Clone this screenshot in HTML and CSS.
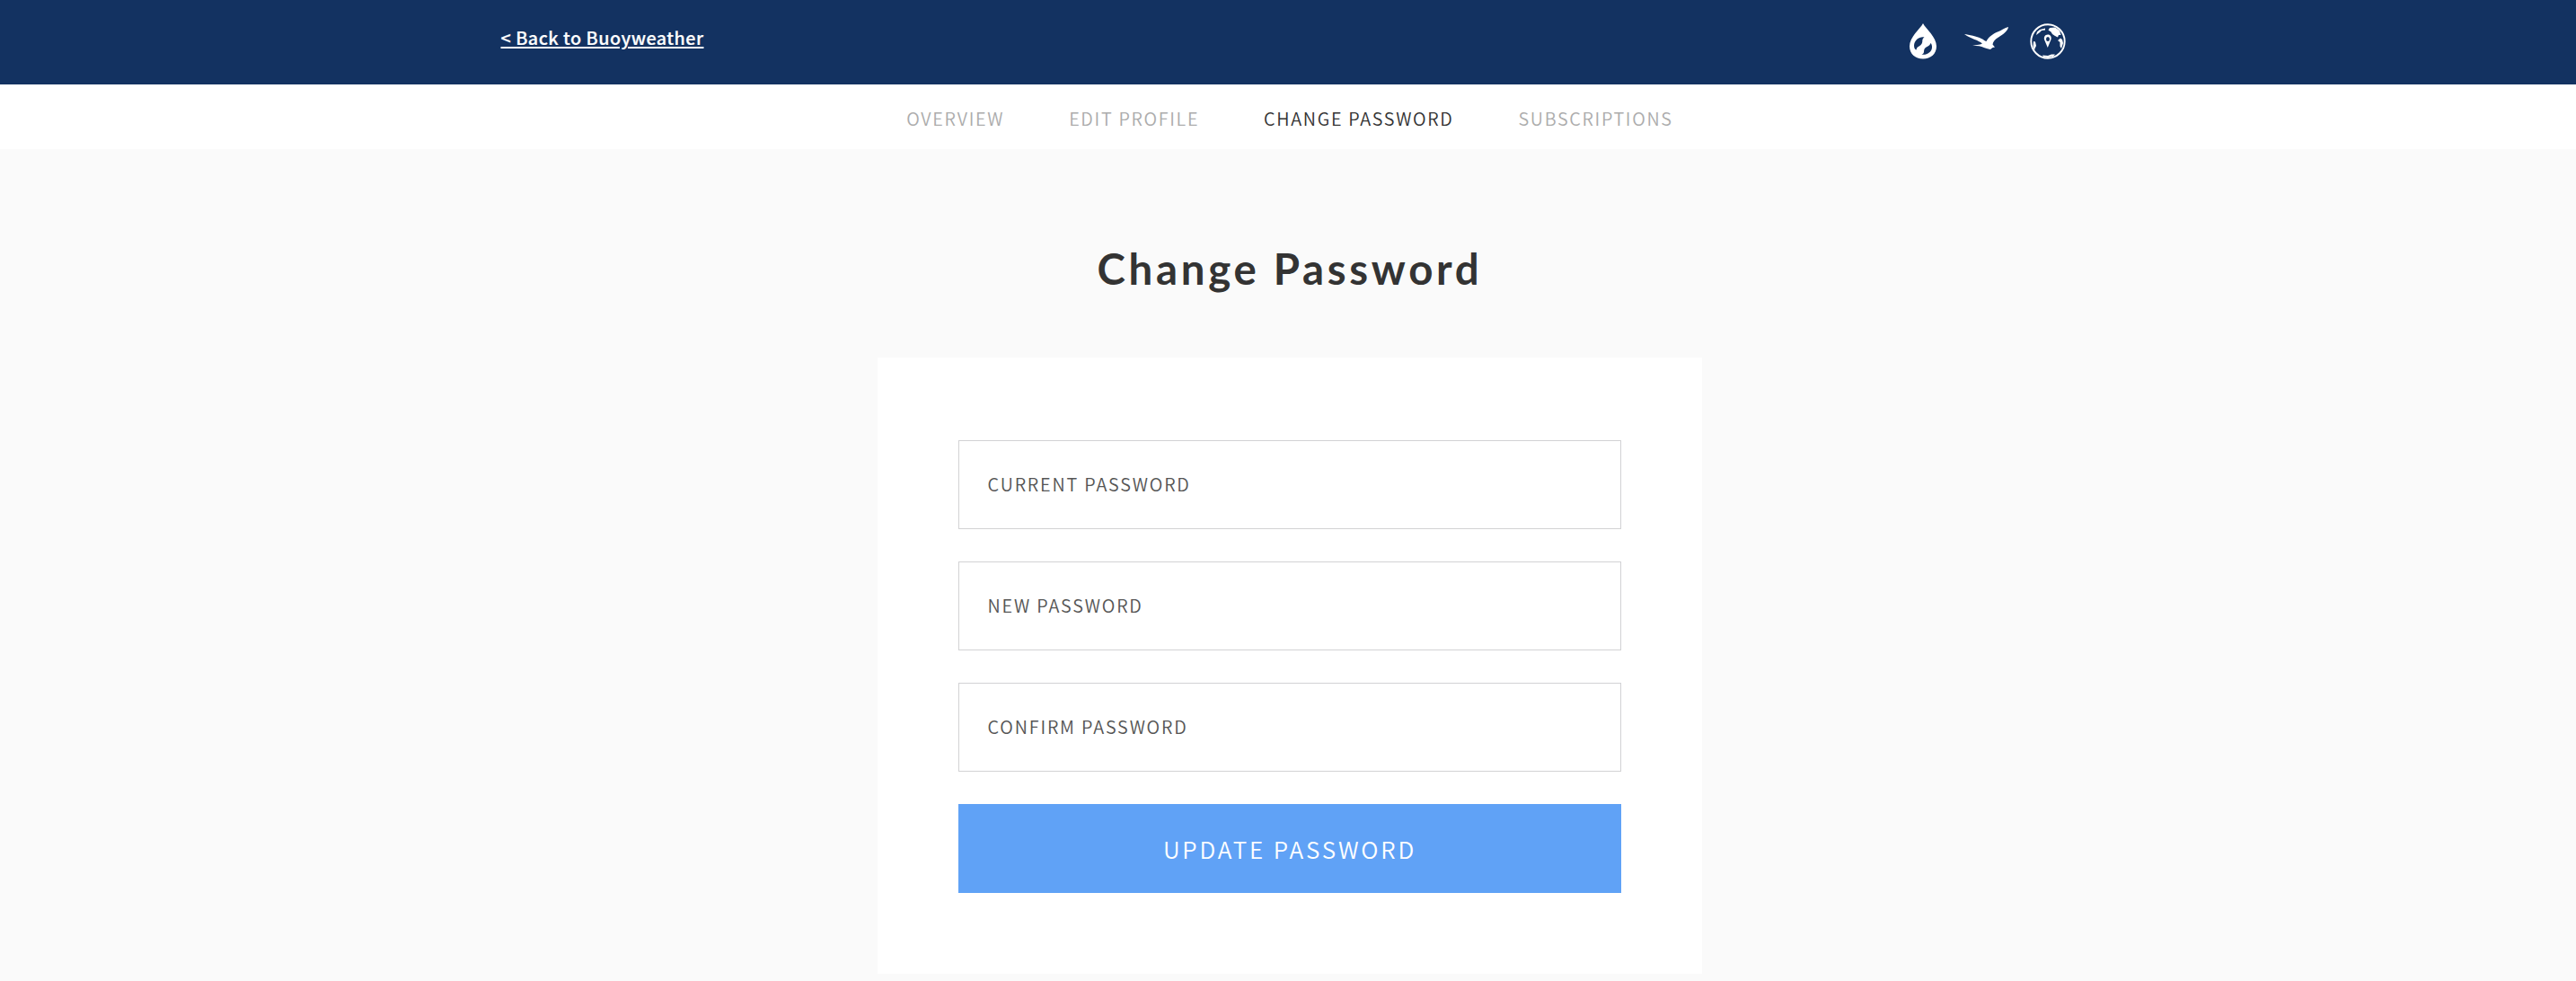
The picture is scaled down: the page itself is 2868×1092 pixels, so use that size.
FILE: index.html
```html
<!DOCTYPE html>
<html lang="en">
<head>
<meta charset="utf-8">
<title>Change Password</title>
<link rel="stylesheet" href="styles.css">
</head>
<body>
<header class="topbar">
  <a class="back" href="#">&lt; Back to Buoyweather</a>
  <div class="brands">
    <svg class="drop" viewBox="0 0 30 40" width="30" height="40"><path fill="#fff" d="M15 0C12 6 0 15 0 25.500C0 34 6.500 39.500 15 39.500S30 34 30 25.500C30 15 18 6 15 0Z"/><path fill="#133261" d="M16.500 15.500C11 14.500 5.500 18.500 5 24.500C5 27.500 6 29 7.500 29.500C8 27 9 26.200 11 25.200C13.500 23.800 14.500 21.500 14.300 19C14.500 17 15.500 16 16.500 15.500ZM23.500 22C22.500 24.500 21.500 25 19.500 26C16.800 27.300 16 29 16 31.500C16 33.500 14.500 34.200 13.500 34.700C19.500 35.500 24.500 32 25 27C25.200 24.500 24.500 23 23.500 22Z"/></svg>
    <svg class="bird" viewBox="0 0 50 26" width="50" height="26"><path fill="#fff" d="M0 8C5 8.500 14 10.500 19 13C21.500 14 22.500 15.500 24.500 16C27 11 32 7.500 37 5.500C41 4 45 1 49 0C48.500 4.500 43 8.500 38 11.500C34 14 32 16 31.500 19.500L34 22.500L31.500 23L29 25C25 24.500 20 22 16.500 21.200L9 20.800L16 19.800C18 19.500 19 19 20 18.500C15 14.500 8 13 3 10Z"/></svg>
    <svg class="globe" viewBox="0 0 40 40" width="40" height="40"><circle cx="20" cy="20" r="18.700" fill="none" stroke="#fff" stroke-width="1.900"/><path fill="#fff" d="M22 5L28 4.500L33 8L34.500 13L32 13L31 15.500L28 14L25 12L23.500 9.500L20.500 7.500ZM31 19L34 16.500L36 18L37 22L35 28L33.500 25.500L33.500 21ZM4 20L6 20.500L7 25L5.500 28L5 31L3.500 26ZM8 9.500L11 7L17 5.500L17 7.500L13 8L11 10L7 13ZM14 35.500L20 36L24 34.500L28 34.500L26 37L20 38L15 37Z"/><path fill="#fff" fill-rule="evenodd" d="M20 12.500C16.500 12.500 15.500 15.500 16 18L19.800 27L23.500 18C24.300 15 23 12.500 20 12.500ZM20 15A2 2.500 0 1 1 20 20A2 2.500 0 1 1 20 15Z"/></svg>
  </div>
</header>
<nav class="tabs">
  <a class="tab" href="#">OVERVIEW</a>
  <a class="tab" href="#">EDIT PROFILE</a>
  <a class="tab active" href="#">CHANGE PASSWORD</a>
  <a class="tab" href="#">SUBSCRIPTIONS</a>
</nav>
<main class="page">
  <h1 class="title">Change Password</h1>
  <form class="card">
    <label class="field">CURRENT PASSWORD</label>
    <label class="field">NEW PASSWORD</label>
    <label class="field">CONFIRM PASSWORD</label>
    <button class="submit" type="button">UPDATE PASSWORD</button>
  </form>
</main>
</body>
</html>
```
FILE: styles.css
```css
* { box-sizing: border-box; }
body {
  margin: 0;
  height: 1092px;
  overflow: hidden;
  background: #fafafa;
  font-family: "Noto Sans CJK JP", sans-serif;
  color: #333;
}
a { text-decoration: none; }
.topbar {
  height: 94px;
  padding: 0 568px 0 557.5px;
  background: #133261;
  display: flex;
  justify-content: space-between;
  align-items: flex-start;
}
.back {
  margin-top: 27px;
  font-size: 19.8px;
  line-height: 30px;
  font-weight: 500;
  letter-spacing: .46px;
  -webkit-text-stroke: .2px #fff;
  color: #fff;
  text-decoration: underline;
  text-decoration-thickness: 2px;
  text-underline-offset: 2px;
}
.brands { display: flex; margin-top: 26px; }
.bird { margin: 4px 0 0 31px; }
.globe { margin-left: 23px; }
.tabs {
  height: 72px;
  padding: 23px 0 0 4px;
  background: #fff;
  display: flex;
  justify-content: center;
  gap: 72px;
}
.tab {
  font-size: 19.8px;
  font-weight: 350;
  line-height: 30px;
  letter-spacing: 1.67px;
  color: #acacac;
}
.active { color: #333; }
.page {
  display: flex;
  flex-direction: column;
  align-items: center;
  padding-left: 4px;
}
.title {
  margin: 103px 0 69px;
  font: 700 47.4px/60px Lato, sans-serif;
  letter-spacing: 3.7px;
}
.card {
  width: 918px;
  height: 686px;
  padding: 92px 90px 90px;
  background: #fff;
  display: flex;
  flex-direction: column;
  gap: 36px;
}
.field {
  height: 99px;
  border: 1px solid #d2d2d4;
  padding: 0 0 3px 31.6px;
  display: flex;
  align-items: center;
  font-size: 19.8px;
  font-weight: 350;
  letter-spacing: 1.82px;
  color: #555;
}
.submit {
  height: 99px;
  border: 0;
  background: #60a2f6;
  color: #fff;
  font: 350 26px "Noto Sans CJK JP", sans-serif;
  letter-spacing: 2.85px;
}
```
